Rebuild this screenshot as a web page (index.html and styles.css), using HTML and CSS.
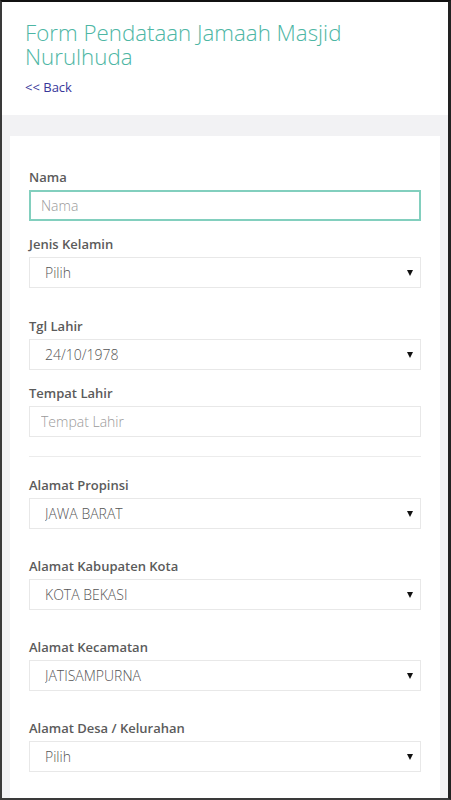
FILE: index.html
```html
<!DOCTYPE html>
<html lang="id">
<head>
<meta charset="utf-8">
<title>Form Pendataan Jamaah Masjid Nurulhuda</title>
<link rel="stylesheet" href="styles.css">
</head>
<body>
<div class="page">
  <header class="header">
    <h1 class="title">Form Pendataan Jamaah Masjid Nurulhuda</h1>
    <a class="back" href="#">&lt;&lt; Back</a>
  </header>
  <main class="main">
    <form class="card">
      <div class="group">
        <label class="label">Nama</label>
        <input class="control control-focus" type="text" placeholder="Nama">
      </div>
      <div class="group group-wide">
        <label class="label">Jenis Kelamin</label>
        <div class="select-wrap">
          <select class="control select"><option>Pilih</option></select>
          <span class="caret"></span>
        </div>
      </div>
      <div class="group">
        <label class="label">Tgl Lahir</label>
        <div class="select-wrap">
          <select class="control select"><option>24/10/1978</option></select>
          <span class="caret"></span>
        </div>
      </div>
      <div class="group">
        <label class="label">Tempat Lahir</label>
        <input class="control" type="text" placeholder="Tempat Lahir">
      </div>
      <hr class="divider">
      <div class="group group-extra">
        <label class="label">Alamat Propinsi</label>
        <div class="select-wrap">
          <select class="control select"><option>JAWA BARAT</option></select>
          <span class="caret"></span>
        </div>
      </div>
      <div class="group group-extra">
        <label class="label">Alamat Kabupaten Kota</label>
        <div class="select-wrap">
          <select class="control select"><option>KOTA BEKASI</option></select>
          <span class="caret"></span>
        </div>
      </div>
      <div class="group group-extra">
        <label class="label">Alamat Kecamatan</label>
        <div class="select-wrap">
          <select class="control select"><option>JATISAMPURNA</option></select>
          <span class="caret"></span>
        </div>
      </div>
      <div class="group">
        <label class="label">Alamat Desa / Kelurahan</label>
        <div class="select-wrap">
          <select class="control select"><option>Pilih</option></select>
          <span class="caret"></span>
        </div>
      </div>
    </form>
  </main>
</div>
</body>
</html>
```
FILE: styles.css
```css
html, body {
  margin: 0;
  padding: 0;
}
body {
  font-family: "Open Sans", "Liberation Sans", sans-serif;
  color: #555;
}
.page {
  box-sizing: border-box;
  height: 100vh;
  overflow: hidden;
  border-top: 2px solid #111;
  border-left: 2px solid #3a3a3a;
  border-right: 3px solid #222;
  border-bottom: 2px solid #3a3a3a;
  background: #f2f2f4;
  display: flex;
  flex-direction: column;
}
.header {
  background: #fff;
  padding: 19px 23px 0;
  height: 113px;
  box-sizing: border-box;
  flex: none;
}
.title {
  margin: 0;
  font-weight: 300;
  font-size: 22.3px;
  line-height: 24px;
  color: #4db6a4;
}
.back {
  display: inline-block;
  margin-top: 9px;
  font-size: 13px;
  line-height: 18px;
  color: #38379a;
  text-decoration: none;
}
.main {
  padding: 21px 8px 0 8px;
  flex: 1;
  display: flex;
  flex-direction: column;
}
.card {
  flex: 1;
  background: #fff;
  padding: 32px 19px 20px;
  margin: 0;
}
.group {
  margin-bottom: 14px;
}
.group-wide {
  margin-bottom: 29px;
}
.group-extra {
  margin-bottom: 28px;
}
.label {
  display: block;
  font-weight: 600;
  font-size: 13px;
  line-height: 18px;
  color: #5b5b5b;
  margin-bottom: 4px;
}
.control {
  display: block;
  box-sizing: border-box;
  width: 100%;
  height: 31px;
  margin: 0;
  border: 1px solid #e8e8e8;
  border-radius: 0;
  background: #fff;
  font-family: "Open Sans", "Liberation Sans", sans-serif;
  font-weight: 300;
  font-size: 14px;
  color: #555;
  padding: 0 11px;
  outline: none;
}
.control::placeholder {
  color: #9a9a9a;
}
.control-focus {
  border: 2px solid #82cfbe;
  padding: 0 10px;
}
.select {
  -webkit-appearance: none;
  appearance: none;
  padding: 0 15px;
}
.select-wrap {
  position: relative;
}
.caret {
  position: absolute;
  right: 8px;
  top: 13px;
  width: 0;
  height: 0;
  border-left: 3px solid transparent;
  border-right: 3px solid transparent;
  border-top: 6px solid #111;
  pointer-events: none;
}
.divider {
  border: 0;
  border-top: 1px solid #ececec;
  margin: 19px 0 19px;
}
```
